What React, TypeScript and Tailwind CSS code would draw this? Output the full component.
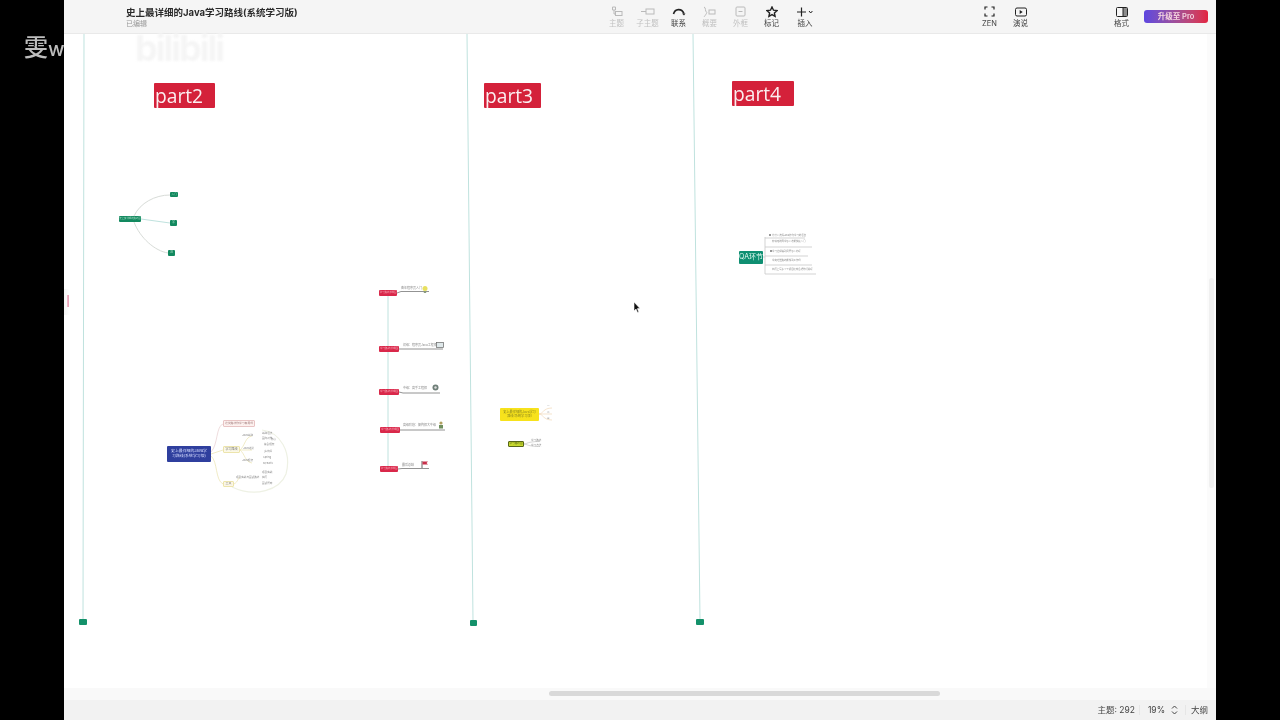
import React from "react";

const F = "font-['Inter','Noto_Sans_CJK_SC',sans-serif]";
const X0 = 64;
const Y0 = 34;

type N = { x: number; y: number; w: number; h: number; t?: string; bg: string; c?: string; fs?: number; r?: number; b?: string };

const nodes: N[] = [
  { x: 119, y: 216, w: 22, h: 6, t: "史上最详细的路线图", bg: "#12895f", c: "#a9dcc6", fs: 2.4 },
  { x: 170, y: 192, w: 8, h: 5, t: "入门", bg: "#12895f", c: "#a9dcc6", fs: 2.6 },
  { x: 170, y: 220, w: 7, h: 6, t: "学", bg: "#12895f", c: "#a9dcc6", fs: 3 },
  { x: 168, y: 250, w: 7, h: 6, t: "进", bg: "#12895f", c: "#a9dcc6", fs: 3 },
  { x: 167, y: 446, w: 44, h: 16, t: "史上最详细的Java学\n习路线(系统学习版)", bg: "#2f3f9e", c: "#d6dcff", fs: 3.9, r: 1 },
  { x: 223, y: 420, w: 32, h: 7, t: "这次路线你学习有用吗", bg: "#fdf1ef", c: "#a07a7a", fs: 2.8, b: "#e8c4c4" },
  { x: 223, y: 446, w: 17, h: 7, t: "学习路线", bg: "#fbf8e6", c: "#777", fs: 3, b: "#ece4ac" },
  { x: 223, y: 481, w: 11, h: 6, t: "重点", bg: "#fbf6e6", c: "#777", fs: 3, b: "#ece4ac" },
  { x: 379, y: 290, w: 18, h: 6, t: "学习路线详细图", bg: "#d9284a", c: "#f7a8b8", fs: 2.4 },
  { x: 379, y: 346, w: 20, h: 6, t: "学习路线详细图", bg: "#d9284a", c: "#f7a8b8", fs: 2.6 },
  { x: 379, y: 389, w: 20, h: 6, t: "学习路线详细图", bg: "#d9284a", c: "#f7a8b8", fs: 2.6 },
  { x: 380, y: 427, w: 20, h: 6, t: "学习路线详细图", bg: "#d9284a", c: "#f7a8b8", fs: 2.6 },
  { x: 380, y: 466, w: 18, h: 6, t: "学习路线详细图", bg: "#d9284a", c: "#f7a8b8", fs: 2.4 },
  { x: 500, y: 408, w: 39, h: 13, t: "史上最详细的Java学习\n路线(系统学习版)", bg: "#f7e21c", c: "#8f8a20", fs: 3.2 },
  { x: 508, y: 441, w: 16, h: 6, t: "学习路线图", bg: "#c8d92e", c: "#5c6a14", fs: 2.6, b: "#57661a" },
  { x: 739, y: 251, w: 24, h: 13, t: "QA环节", bg: "#0f8f72", c: "#e6fbf3", fs: 7, r: 1 },
  { x: 79, y: 619, w: 8, h: 6, bg: "#14916a" },
  { x: 470, y: 620, w: 7, h: 6, bg: "#14916a" },
  { x: 696, y: 619, w: 8, h: 6, bg: "#14916a" },
];

const labels: { x: number; y: number; t: string; fs?: number }[] = [
  { x: 401, y: 287, t: "青年程序员入门", fs: 3 },
  { x: 403, y: 344, t: "初级：程序员Java工程师", fs: 3 },
  { x: 403, y: 387, t: "中级：高手工程师", fs: 3 },
  { x: 403, y: 424, t: "高级阶段：架构师大牛级", fs: 3 },
  { x: 402, y: 464, t: "最后总结", fs: 3 },
  { x: 242, y: 434, t: "Java基础" }, { x: 243, y: 447, t: "Java进阶" }, { x: 242, y: 459, t: "Java框架" },
  { x: 236, y: 476, t: "项目实战与面试路线" },
  { x: 262, y: 432, t: "基础语法" }, { x: 262, y: 437, t: "面向对象" }, { x: 271, y: 438, t: "核心" },
  { x: 264, y: 443, t: "集合框架" }, { x: 264, y: 450, t: "多线程" }, { x: 263, y: 456, t: "Spring" }, { x: 263, y: 462, t: "MyBatis" },
  { x: 262, y: 471, t: "项目实战" }, { x: 262, y: 476, t: "简历" }, { x: 262, y: 482, t: "面试题库" },
  { x: 547, y: 405, t: "一" }, { x: 547, y: 411, t: "二" }, { x: 547, y: 417, t: "三" },
  { x: 531, y: 439, t: "学习路线" }, { x: 531, y: 443.5, t: "学习方法" },
  { x: 772, y: 235, t: "为什么选择Java作为学习的语言", fs: 2.4 },
  { x: 772, y: 241, t: "非科班的同学怎么才能快速入门", fs: 2.4 },
  { x: 772, y: 251, t: "学习过程遇到问题怎么办呢", fs: 2.4 },
  { x: 772, y: 260, t: "学完这些路线能找到工作吗", fs: 2.4 },
  { x: 772, y: 269, t: "简历上写多少个项目比较合适你们说呢", fs: 2.4 },
];

const Tool = ({ label, dim, children, w = "w-[31px]" }: { label: string; dim?: boolean; children: React.ReactNode; w?: string }) => (
  <div className={`flex flex-col items-center ${w} ${dim ? "opacity-30" : ""}`}>
    <div className="h-[14px] flex items-center justify-center text-[#333]">{children}</div>
    <div className="text-[7.5px] leading-[10px] text-[#444] whitespace-nowrap">{label}</div>
  </div>
);

const Badge = ({ t, x, y, w, h }: { t: string; x: number; y: number; w: number; h: number }) => (
  <div
    className="absolute bg-[#d4213a] text-[#fbeef0] text-[19.2px] font-['Open_Sans',sans-serif] leading-none flex items-center pl-[1px] rounded-[1px]"
    style={{ left: x - X0, top: y - Y0, width: w, height: h }}
  >
    {t}
  </div>
);

export default function App() {
  return (
    <div className={`relative flex h-[720px] w-[1280px] overflow-hidden bg-black blur-[0.45px] ${F}`}>
      <div className="w-16 shrink-0 bg-black" />
      <div className="flex w-[1152px] flex-col bg-[#f9f9f9]">
        <header className="flex h-[34px] shrink-0 items-center border-b border-[#e9e9e9] bg-[#f5f5f5]">
          <div className="ml-[62px] w-[470px]">
            <div className="text-[9.5px] font-bold leading-[13px] text-[#2b2b2b] mt-[1px]">史上最详细的Java学习路线(系统学习版)</div>
            <div className="text-[7px] leading-[9px] text-[#999]">已编辑</div>
          </div>
          <div className="ml-[5px] flex items-center">
            <Tool label="主题" dim>
              <svg width="12" height="11" viewBox="0 0 12 11" fill="none" stroke="currentColor"><path d="M1.5 1h3v3h-3zM3 4v4h1.5" /><rect x="4.5" y="5.5" width="6.5" height="4" /></svg>
            </Tool>
            <Tool label="子主题" dim>
              <svg width="14" height="9" viewBox="0 0 14 9" fill="none" stroke="currentColor"><path d="M0 4.5h5" /><rect x="5" y="2" width="8" height="5" /></svg>
            </Tool>
            <Tool label="联系">
              <svg width="14" height="9" viewBox="0 0 14 9" fill="none" stroke="#222" strokeWidth="1.6"><path d="M1.5 7C3 1.5 9.5 1 12 6.5" /><path d="M10 6.5h3.5l-1.5 2z" fill="#222" stroke="none" /></svg>
            </Tool>
            <Tool label="概要" dim>
              <svg width="13" height="12" viewBox="0 0 13 12" fill="none" stroke="currentColor"><path d="M1 1c2 0 1 5 2.5 5S1 11 1 11" /><rect x="6" y="4" width="6" height="4" /></svg>
            </Tool>
            <Tool label="外框" dim>
              <svg width="11" height="11" viewBox="0 0 11 11" fill="none" stroke="currentColor"><rect x="1" y="1" width="9" height="9" rx="1" /><path d="M3.5 5.5h4" /></svg>
            </Tool>
            <Tool label="标记">
              <svg width="12" height="12" viewBox="0 0 12 12" fill="none" stroke="#222" strokeWidth="1.4"><path d="M6 1l1.5 3.2 3.5.4-2.6 2.3.7 3.4L6 8.6l-3.1 1.7.7-3.4L1 4.6l3.5-.4z" /></svg>
            </Tool>
            <Tool label="插入" w="w-[36px]">
              <svg width="16" height="10" viewBox="0 0 16 10" fill="none" stroke="#222"><path d="M4.5 0.5v9M0 5h9" strokeWidth="1.2" /><path d="M12 4l1.7 2 1.7-2" /></svg>
            </Tool>
          </div>
          <div className="ml-[151px] flex items-center">
            <Tool label="ZEN">
              <svg width="11" height="11" viewBox="0 0 11 11" fill="none" stroke="#222" strokeWidth="1.2"><path d="M1 3.5V1h2.5M7.5 1H10v2.5M10 7.5V10H7.5M3.5 10H1V7.5" /></svg>
            </Tool>
            <Tool label="演说">
              <svg width="12" height="10" viewBox="0 0 12 10" fill="none" stroke="#222"><rect x=".5" y="1" width="11" height="8" rx="1.5" /><path d="M4.7 3l3 2-3 2z" fill="#222" stroke="none" /></svg>
            </Tool>
          </div>
          <div className="ml-[70px]">
            <Tool label="格式">
              <svg width="12" height="10" viewBox="0 0 12 10" fill="none" stroke="#222"><rect x=".5" y=".5" width="11" height="9" rx="1" /><path d="M7 .5v9" /><rect x="7" y="1" width="4" height="8" fill="#222" stroke="none" opacity=".5" /></svg>
            </Tool>
          </div>
          <div className="ml-[7px] flex h-[13px] w-[64px] items-center justify-center rounded-[3px] bg-gradient-to-r from-[#5d45e0] to-[#e3213f] text-[7.5px] font-semibold text-[#f5d6e0]">
            升级至 Pro
          </div>
        </header>

        <div className="flex min-h-0 flex-1">
          <main className="relative min-w-0 flex-1 overflow-hidden bg-white">
            <svg className="absolute left-0 top-0" width="1152" height="666" viewBox="64 34 1152 666" fill="none">
              <g stroke="#bfe2de" strokeWidth="1">
                <path d="M84 34L83 620M467 34L473 621M693 34L700 620" />
                <path d="M388 296V470" />
                <path d="M141 219L170 223" />
              </g>
              <g stroke="#d8dcd8" strokeWidth="1">
                <path d="M134 216C140 203 155 195 170 195" />
                <path d="M134 222C140 238 155 251 168 253" />
              </g>
              <g stroke="#e8cfd0" strokeWidth=".7"><path d="M211 452C218 445 216 426 223 424" /></g>
              <g stroke="#ece6b8" strokeWidth=".8">
                <path d="M211 454L223 450M211 456C218 462 215 480 223 484" />
                <path d="M240 450C245 446 245 437 252 436M240 450H252M240 450C245 454 245 462 252 463" />
                <path d="M234 484C238 482 238 478 240 477" />
              </g>
              <g stroke="#eef1e4" strokeWidth="1.2"><path d="M262 430C280 432 292 452 286 474 280 490 255 498 232 487" /></g>
              <g stroke="#777" strokeWidth=".8">
                <path d="M397 293L401 291.5H429M399 349L402 349H443M399 392L403 393H440M400 430L403 430H445M398 469L402 468.5H429" />
              </g>
              <g stroke="#f1d8b8" strokeWidth=".7">
                <path d="M539 414C543 414 543 408 552 408M539 414H552M539 414C543 414 543 420 552 420" />
              </g>
              <g stroke="#c4c4c4" strokeWidth=".7"><path d="M524 444C527 444 527 441.5 540 441.5M524 444C527 444 527 446.5 540 446.5" /></g>
              <g stroke="#c8c8c8" strokeWidth=".8">
                <path d="M763 257H765M765 237V274H816" />
                <path d="M765 238H805M765 247H812M765 256H808M765 265H812" />
              </g>
              {[[770, 235], [771, 251]].map(([x, y]) => <circle key={x} cx={x} cy={y} r="1" fill="#777" />)}
            </svg>

            <Badge t="part2" x={154} y={83} w={61} h={25} />
            <Badge t="part3" x={484} y={83} w={57} h={25} />
            <Badge t="part4" x={732} y={81} w={62} h={25} />

            {nodes.map((n, i) => (
              <div
                key={i}
                className="absolute flex items-center justify-center overflow-hidden text-center whitespace-pre leading-[1.2] blur-[0.25px]"
                style={{
                  left: n.x - X0, top: n.y - Y0, width: n.w, height: n.h, background: n.bg, color: n.c,
                  fontSize: n.fs, borderRadius: n.r ?? 1, border: n.b ? `0.6px solid ${n.b}` : undefined,
                }}
              >
                {n.t}
              </div>
            ))}
            {labels.map((l, i) => (
              <div
                key={i}
                className="absolute whitespace-nowrap leading-none text-[#8a8a8a] blur-[0.25px]"
                style={{ left: l.x - X0, top: l.y - Y0, fontSize: l.fs ?? 2.6 }}
              >
                {l.t}
              </div>
            ))}

            <svg className="absolute left-[357px] top-[251px]" width="8" height="9" viewBox="0 0 8 9"><circle cx="4" cy="3.5" r="2.5" fill="#e8e060" /><rect x="2.8" y="6" width="2.4" height="2" fill="#8a9a80" /></svg>
            <svg className="absolute left-[372px] top-[308px]" width="8" height="6" viewBox="0 0 8 6"><rect x=".5" y=".5" width="7" height="5" fill="#dfe8ea" stroke="#666" strokeWidth=".7" /></svg>
            <svg className="absolute left-[368px] top-[350px]" width="7" height="7" viewBox="0 0 7 7"><circle cx="3.5" cy="3.5" r="3" fill="#6f7f78" /><circle cx="3.5" cy="3.5" r="1.2" fill="#ddd" /></svg>
            <svg className="absolute left-[374px] top-[387px]" width="6" height="8" viewBox="0 0 6 8"><circle cx="3" cy="2" r="1.6" fill="#b0a060" /><rect x="1" y="4" width="4" height="3.5" fill="#6f8f5f" /></svg>
            <svg className="absolute left-[357px] top-[427px]" width="8" height="7" viewBox="0 0 8 7"><path d="M1 0v7" stroke="#666" /><path d="M1.5 .5H7L5.5 2 7 3.5H1.5z" fill="#c8304a" /></svg>

            <svg className="absolute left-[569px] top-[267px]" width="8" height="13" viewBox="0 0 8 13"><path d="M1 1v9l2-2 1.5 3.5 1.3-.6L4.4 7.6H7z" fill="#111" stroke="#fff" strokeWidth=".6" /></svg>

            <div className="absolute left-[3px] top-[261px] h-[12px] w-[2px] bg-[#e88aa6]" />
            <div className="absolute left-0 top-[255px] h-[26px] w-[6px] bg-gradient-to-r from-[#f4f4f4] to-transparent" />
          </main>
          <div className="w-[9px] shrink-0 bg-[#fbfbfb] pl-[2px] pt-[244px]">
            <div className="h-[210px] w-[5px] rounded-full bg-[#f0f0f0]" />
          </div>
        </div>

        <div className="h-[12px] shrink-0 bg-[#f9f9f9] pl-[485px] pt-[3px]">
          <div className="h-[5px] w-[391px] rounded-full bg-[#d9d9d9]" />
        </div>

        <footer className="flex h-[20px] shrink-0 items-center justify-end bg-[#f2f2f2] pr-[8px] text-[8.5px] text-[#444]">
          <span>主题: 292</span>
          <span className="ml-[4px] mr-[8px] h-[10px] w-px bg-[#e6e6e6]" />
          <span>19%</span>
          <svg className="ml-[6px]" width="7" height="10" viewBox="0 0 7 10" fill="none" stroke="#444"><path d="M1 3.5L3.5 1 6 3.5M1 6.5L3.5 9 6 6.5" /></svg>
          <span className="ml-[7px] mr-[5px] h-[10px] w-px bg-[#e6e6e6]" />
          <span>大纲</span>
        </footer>
      </div>
      <div className="w-16 shrink-0 bg-black" />

      <div className="absolute left-[24px] top-[34px] text-[24px] leading-[28px] font-medium text-[#bdbdbd]">雯<span className="text-[20px]">w</span></div>
      <div className="absolute left-[135px] top-[27px] text-[36px] leading-[42px] font-bold tracking-[-2px] text-[#f5f5f5] blur-[1px] font-['Inter',sans-serif]">bilibili</div>
    </div>
  );
}
